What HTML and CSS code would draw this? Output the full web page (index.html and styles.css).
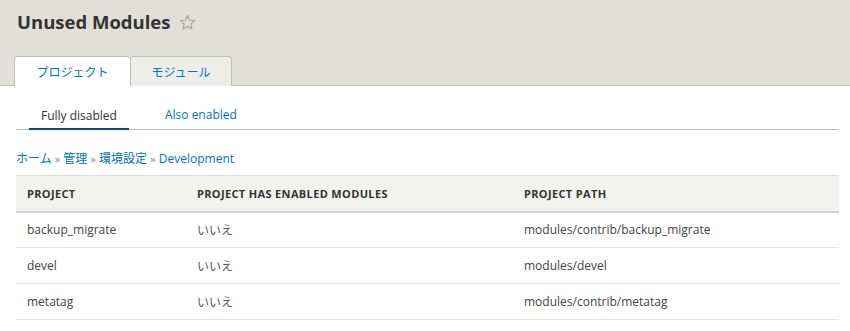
FILE: index.html
```html
<!DOCTYPE html>
<html lang="ja">
<head>
<meta charset="utf-8">
<title>Unused Modules</title>
<link rel="stylesheet" href="styles.css">
</head>
<body>
<header class="page-header">
  <h1 class="page-title">Unused Modules <svg class="star" width="17" height="17" viewBox="0 0 24 24"><path d="M12 2.2l2.9 6.6 7.2.6-5.5 4.8 1.7 7.1L12 17.5l-6.3 3.8 1.7-7.1-5.5-4.8 7.2-.6z" fill="none" stroke="#a6a6a0" stroke-width="1.6" stroke-linejoin="round"/></svg></h1>
  <nav class="primary-tabs">
    <a class="ptab active" href="#">プロジェクト</a>
    <a class="ptab" href="#">モジュール</a>
  </nav>
</header>
<main class="content">
  <nav class="secondary-tabs">
    <a class="stab active" href="#">Fully disabled</a>
    <a class="stab" href="#">Also enabled</a>
  </nav>
  <div class="breadcrumb">
    <a href="#">ホーム</a> <span class="sep">»</span> <a href="#">管理</a> <span class="sep">»</span> <a href="#">環境設定</a> <span class="sep">»</span> <a href="#">Development</a>
  </div>
  <table class="projects">
    <thead>
      <tr><th class="c1">Project</th><th class="c2">Project has enabled modules</th><th>Project path</th></tr>
    </thead>
    <tbody>
      <tr><td>backup_migrate</td><td class="no">いいえ</td><td>modules/contrib/backup_migrate</td></tr>
      <tr><td>devel</td><td class="no">いいえ</td><td>modules/devel</td></tr>
      <tr><td>metatag</td><td class="no">いいえ</td><td>modules/contrib/metatag</td></tr>
    </tbody>
  </table>
</main>
</body>
</html>
```
FILE: styles.css
```css
* { box-sizing: border-box; }
html, body { margin: 0; padding: 0; }
body {
  font-family: "Open Sans", "Noto Sans CJK JP", sans-serif;
  font-size: 12px;
  color: #333;
  background: #fff;
}
a { color: #0074bd; text-decoration: none; }

.page-header {
  background: #e0e0d8;
  border-bottom: 1px solid #bfbfba;
  padding: 9px 0 0 14px;
  height: 86px;
}
.page-title {
  margin: 0 0 20px 3px;
  font-size: 18.5px;
  font-weight: bold;
  color: #333;
  line-height: 26px;
  height: 26px;
  display: flex;
  align-items: center;
}
.star {
  margin-left: 9px;
  margin-top: 1px;
}
.primary-tabs {
  display: flex;
  align-items: flex-end;
  height: 31px;
}
.ptab {
  display: block;
  height: 30px;
  line-height: 29px;
  text-align: center;
  border: 1px solid #bfbfba;
  border-bottom: none;
  border-radius: 4px 4px 0 0;
  background: #ededea;
  font-size: 12px;
  color: #0074bd;
  font-family: "Noto Sans CJK JP", sans-serif;
}
.ptab.active {
  background: #fff;
  width: 116px;
  height: 31px;
  margin-bottom: -1px;
  border-right: none;
  position: relative;
  z-index: 1;
}
.ptab:not(.active) {
  width: 102px;
  height: 30px;
}

.content {
  padding: 0 11px 0 16px;
}
.secondary-tabs {
  display: flex;
  border-bottom: 1px solid #bfbfba;
  padding-left: 13px;
  height: 44px;
  align-items: flex-end;
}
.stab {
  display: block;
  white-space: nowrap;
  height: 30px;
  line-height: 32px;
  padding: 0 12px;
  font-size: 12px;
  color: #0074bd;
}
.stab.active {
  color: #333;
  border-bottom: 2px solid #004f80;
  margin-bottom: -1px;
  height: 31px;
  line-height: 34px;
}
.stab:not(.active) {
  margin-left: 24px;
}

.breadcrumb {
  padding-top: 21px;
  height: 45px;
  line-height: 16px;
  font-size: 12px;
}
.breadcrumb .sep { color: #888; font-size: 11px; }

.projects {
  width: 823px;
  border-collapse: collapse;
  font-size: 12px;
}
.projects thead tr {
  background: #f2f2ef;
  border-top: 1px solid #dcdcd6;
  border-bottom: 2px solid #d4d4ce;
}
.projects th {
  text-align: left;
  text-transform: uppercase;
  font-weight: bold;
  font-size: 11px;
  letter-spacing: 0.35px;
  height: 36px;
  padding: 0 11px;
  color: #333;
}
.projects th.c1 { width: 170px; }
.projects th.c2 { width: 327px; }
.projects td {
  height: 36px;
  padding: 0 11px;
  border-bottom: 1px solid #e4e4e0;
  color: #444;
}
.projects td.no {
  font-family: "Noto Sans CJK JP", sans-serif;
  color: #555;
}
```
